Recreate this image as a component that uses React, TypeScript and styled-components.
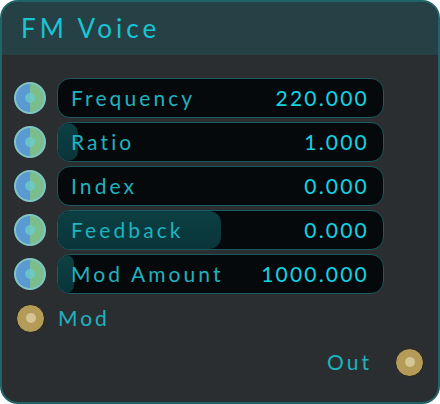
import React from "react";
import styled, { createGlobalStyle } from "styled-components";

const Global = createGlobalStyle`
  html, body { margin: 0; padding: 0; background: #ffffff; }
  body { font-family: "Lato", "Open Sans", sans-serif; }
`;

const Card = styled.div`
  box-sizing: border-box;
  width: 440px;
  height: 404px;
  border: 2px solid #1f6468;
  border-radius: 18px;
  background: #2a2e30;
  overflow: hidden;
  display: flex;
  flex-direction: column;
`;

const Header = styled.div`
  height: 53px;
  background: #264145;
  display: flex;
  align-items: center;
  padding-left: 19px;
  padding-bottom: 1px;
  box-sizing: border-box;
  color: #19c4d3;
  font-size: 26px;
  letter-spacing: 4px;
`;

const Body = styled.div`
  display: flex;
  flex-direction: column;
  gap: 4px;
  padding: 23px 14px 20px 12px;
`;

const Row = styled.div<{ $end?: boolean }>`
  height: 40px;
  display: flex;
  align-items: center;
  justify-content: ${(p) => (p.$end ? "flex-end" : "flex-start")};
  gap: 11px;
`;

const Knob = styled.div`
  box-sizing: border-box;
  width: 32px;
  height: 32px;
  border-radius: 50%;
  border: 2px solid #7fc6c4;
  background: linear-gradient(90deg, #5a9ad3 50%, #7bbd8b 50%);
  display: flex;
  align-items: center;
  justify-content: center;
  flex: none;
  &::after {
    content: "";
    width: 10px;
    height: 10px;
    border-radius: 50%;
    background: rgba(110, 205, 205, 0.75);
  }
`;

const Jack = styled.div`
  box-sizing: border-box;
  width: 29px;
  height: 29px;
  margin-left: 2px;
  border-radius: 50%;
  border: 1px solid #1a1a18;
  background: #b49b57;
  display: flex;
  align-items: center;
  justify-content: center;
  flex: none;
  &::after {
    content: "";
    width: 10px;
    height: 10px;
    border-radius: 50%;
    background: #d5c595;
  }
`;

const Slider = styled.div`
  position: relative;
  box-sizing: border-box;
  width: 327px;
  height: 40px;
  border: 1px solid #1b5a5e;
  border-radius: 13px;
  background: #05090b;
  overflow: hidden;
  display: flex;
  align-items: center;
  justify-content: space-between;
  padding: 0 16px 2px 13px;
  font-size: 21px;
`;

const Fill = styled.div`
  position: absolute;
  left: 0;
  top: 0;
  bottom: 0;
  border-radius: 12px;
  background: linear-gradient(180deg, #0c3f43 0%, #093539 100%);
`;

const Label = styled.span`
  position: relative;
  color: #1fb2bf;
  letter-spacing: 3.1px;
`;

const Value = styled.span`
  position: relative;
  color: #13d3e3;
  letter-spacing: 2.2px;
  margin-right: -2px;
`;

const PortLabel = styled.span<{ $right?: boolean }>`
  color: #1fb2bf;
  font-size: 21px;
  letter-spacing: 3px;
  padding-bottom: 2px;
  margin-right: ${(p) => (p.$right ? "10px" : "0")};
  margin-left: ${(p) => (p.$right ? "0" : "2px")};
`;

const params = [
  { label: "Frequency", value: "220.000", fill: 0 },
  { label: "Ratio", value: "1.000", fill: 6 },
  { label: "Index", value: "0.000", fill: 0 },
  { label: "Feedback", value: "0.000", fill: 50 },
  { label: "Mod Amount", value: "1000.000", fill: 5 },
];

export default function App() {
  return (
    <>
      <Global />
      <Card>
        <Header>FM Voice</Header>
        <Body>
          {params.map((p) => (
            <Row key={p.label}>
              <Knob />
              <Slider>
                {p.fill > 0 && <Fill style={{ width: `${p.fill}%` }} />}
                <Label>{p.label}</Label>
                <Value>{p.value}</Value>
              </Slider>
            </Row>
          ))}
          <Row>
            <Jack />
            <PortLabel>Mod</PortLabel>
          </Row>
          <Row $end>
            <PortLabel $right>Out</PortLabel>
            <Jack />
          </Row>
        </Body>
      </Card>
    </>
  );
}
